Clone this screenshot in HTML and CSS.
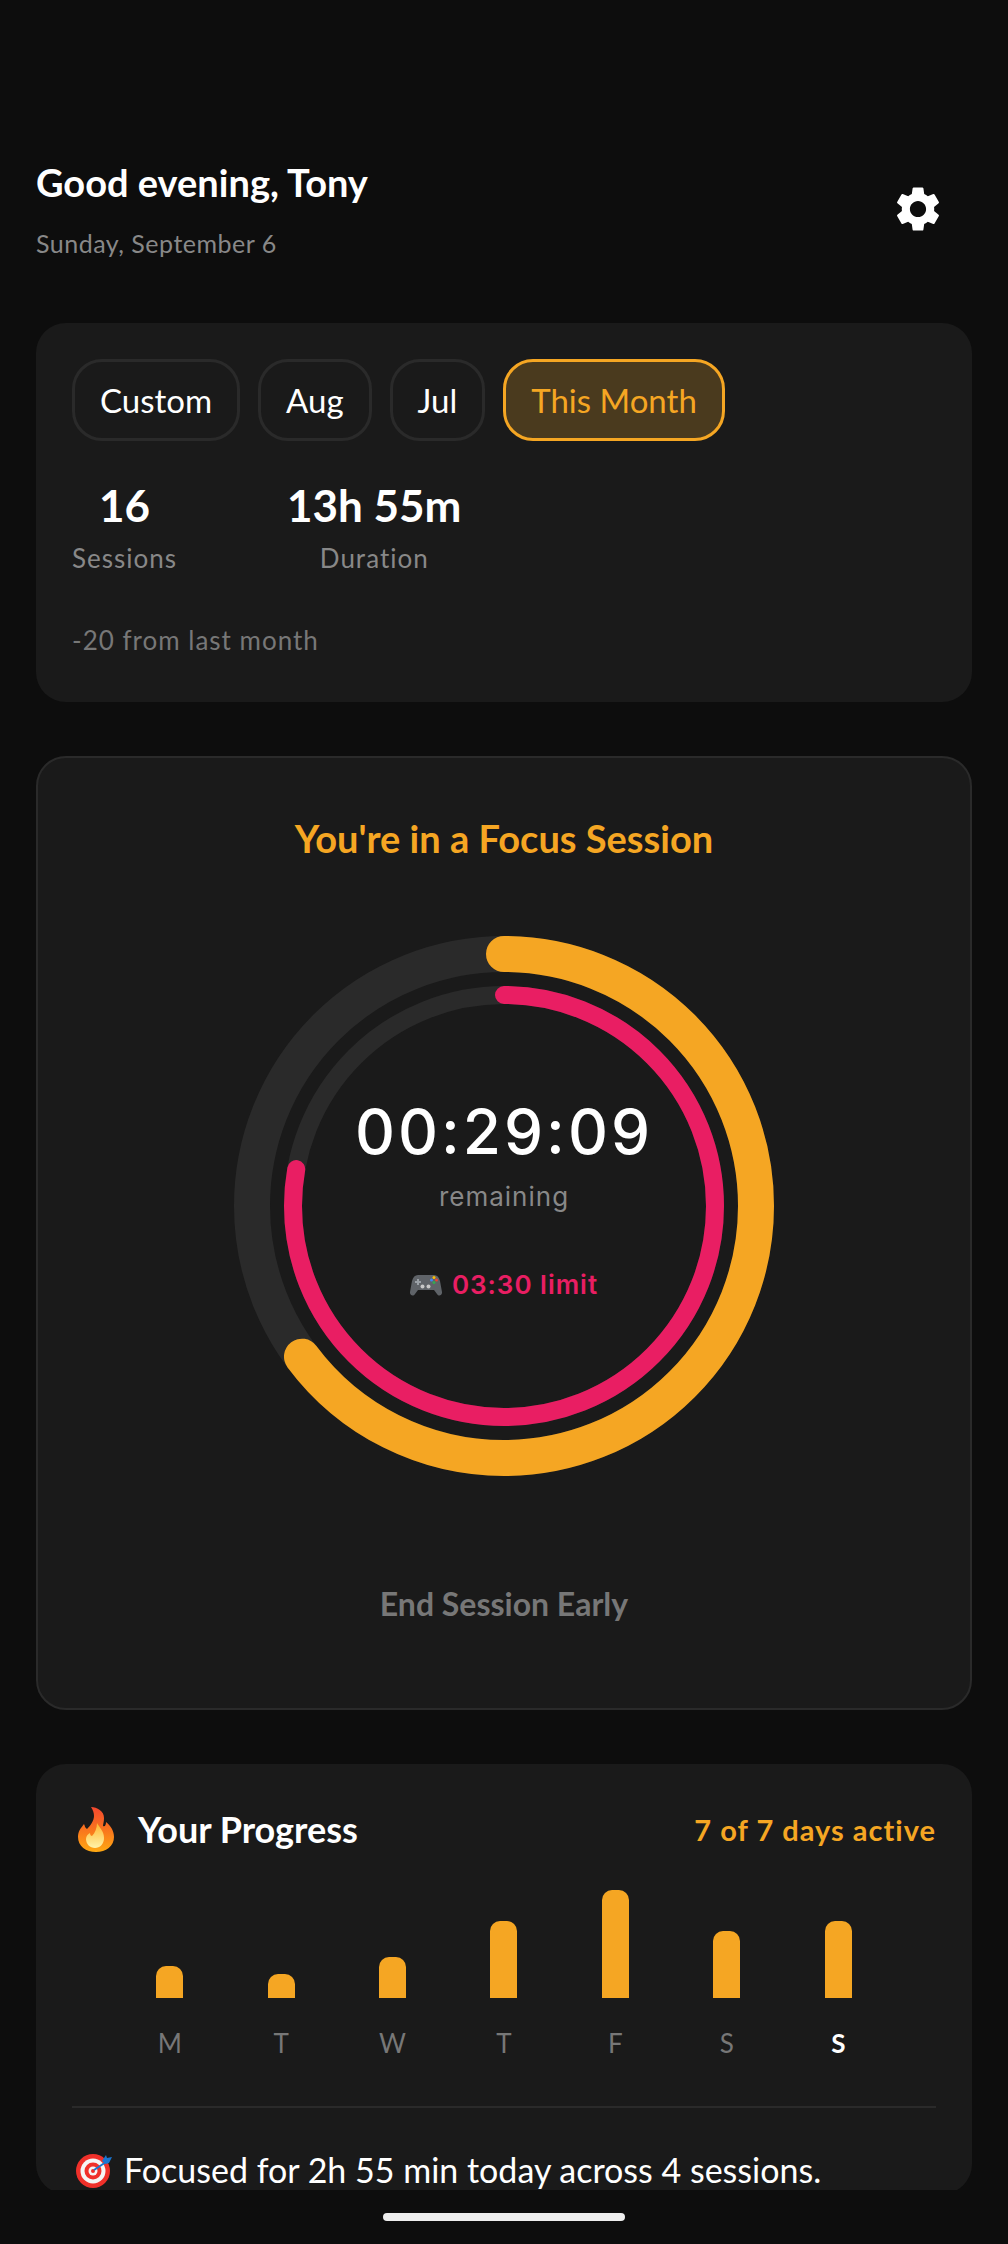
FILE: index.html
```html
<!DOCTYPE html>
<html>
  <head>
    <meta charset="utf-8">
    <title>Focus</title>
    <link rel="stylesheet" href="styles.css">
  </head>
  <body>
    <div class="screen">
      <div class="scroll">
        <div class="header">
          <div>
            <div class="greeting">Good evening, Tony</div>
            <div class="date">Sunday, September 6</div>
          </div>
          <svg class="gear" viewBox="0 0 24 24"><path fill="#fff" d="M19.14 12.94c.04-.3.06-.61.06-.94 0-.32-.02-.64-.07-.94l2.03-1.58c.18-.14.23-.41.12-.61l-1.92-3.32c-.12-.22-.37-.29-.59-.22l-2.39.96c-.5-.38-1.03-.7-1.62-.94l-.36-2.54c-.04-.24-.24-.41-.48-.41h-3.84c-.24 0-.43.17-.47.41l-.36 2.54c-.59.24-1.13.57-1.62.94l-2.39-.96c-.22-.08-.47 0-.59.22L2.74 8.87c-.12.21-.08.47.12.61l2.03 1.58c-.05.3-.09.63-.09.94s.02.64.07.94l-2.03 1.58c-.18.14-.23.41-.12.61l1.92 3.32c.12.22.37.29.59.22l2.39-.96c.5.38 1.03.7 1.62.94l.36 2.54c.05.24.24.41.48.41h3.84c.24 0 .44-.17.47-.41l.36-2.54c.59-.24 1.13-.56 1.62-.94l2.39.96c.22.08.47 0 .59-.22l1.92-3.32c.12-.22.07-.47-.12-.61l-2.01-1.58zM12 15.6c-1.98 0-3.6-1.62-3.6-3.6s1.62-3.6 3.6-3.6 3.6 1.62 3.6 3.6-1.62 3.6-3.6 3.6z"/></svg>
        </div>

        <div class="card summary">
          <div class="pills">
            <div class="pill">Custom</div>
            <div class="pill">Aug</div>
            <div class="pill">Jul</div>
            <div class="pill selected">This Month</div>
          </div>
          <div class="stats">
            <div class="stat">
              <div class="stat-value">16</div>
              <div class="stat-label">Sessions</div>
            </div>
            <div class="stat">
              <div class="stat-value">13h 55m</div>
              <div class="stat-label">Duration</div>
            </div>
          </div>
          <div class="note">-20 from last month</div>
        </div>

        <div class="card session">
          <div class="session-title">You're in a Focus Session</div>
          <div class="ring">
            <svg width="540" height="540" viewBox="0 0 540 540">
              <circle cx="270" cy="270" r="252" fill="none" stroke="#2a2a2a" stroke-width="36"/>
              <circle cx="270" cy="270" r="211" fill="none" stroke="#2a2a2a" stroke-width="18"/>
              <circle cx="270" cy="270" r="252" fill="none" stroke="#f5a623" stroke-width="36" stroke-linecap="round" pathLength="100" stroke-dasharray="64.8 100" transform="rotate(-90 270 270)"/>
              <circle cx="270" cy="270" r="211" fill="none" stroke="#e91e63" stroke-width="18" stroke-linecap="round" pathLength="100" stroke-dasharray="77.8 100" transform="rotate(-90 270 270)"/>
            </svg>
            <div class="ring-text">
              <div class="timer">00:29:09</div>
              <div class="remaining">remaining</div>
              <div class="limit">
                <svg class="pad" viewBox="0 0 32 24">
                  <path fill="#5f6368" d="M8 2h16c3 0 5 2 6 6l2 11c.4 3-3 5-5 2l-3-4H8l-3 4c-2 3-5.400 1-5-2L2 8c1-4 3-6 6-6z"/>
                  <path fill="#9aa0a6" d="M7 6h2v2h2v2H9v2H7v-2H5V8h2z"/>
                  <circle cx="12.500" cy="13.500" r="2" fill="#c8c8c8"/>
                  <circle cx="18.500" cy="13.500" r="2" fill="#c8c8c8"/>
                  <circle cx="24" cy="4.500" r="1.500" fill="#fbbc04"/>
                  <circle cx="21.500" cy="7" r="1.500" fill="#4285f4"/>
                  <circle cx="26.500" cy="7" r="1.500" fill="#ea4335"/>
                  <circle cx="24" cy="9.500" r="1.500" fill="#34a853"/>
                </svg>
                <span>03:30 limit</span>
              </div>
            </div>
          </div>
          <div class="end-session">End Session Early</div>
        </div>

        <div class="card progress">
          <div class="progress-head">
            <div class="progress-title">
              <svg class="flame" viewBox="0 0 36 46">
                <defs>
                  <linearGradient id="flameOuter" x1="0" y1="0" x2="0" y2="1">
                    <stop offset="0" stop-color="#f4472f"/>
                    <stop offset="0.55" stop-color="#f9791c"/>
                    <stop offset="1" stop-color="#ffa912"/>
                  </linearGradient>
                  <linearGradient id="flameInner" x1="0" y1="0" x2="0" y2="1">
                    <stop offset="0" stop-color="#ffb52e"/>
                    <stop offset="1" stop-color="#fff3a8"/>
                  </linearGradient>
                </defs>
                <path fill="url(#flameOuter)" d="M13 1c6 0 13 4 13 11 0 4-1 6-1 8 2 1 3-1 3-4 5 4 8 9 8 15 0 9-8 15-18 15S0 40 0 31c0-6 3-9 6-13 1 2 1 4 3 5 3-3 7-8 7-13 0-3-1-6-3-9z"/>
                <path fill="url(#flameInner)" d="M19 17c2 4 7 8 7 15 0 6-4 10-9 10s-9-4-9-9c0-3 2-5 4-6 0 2 1 3 2 3 3-3 5-8 5-13z"/>
              </svg>
              <span>Your Progress</span>
            </div>
            <div class="active-days">7 of 7 days active</div>
          </div>
          <div class="chart">
            <div class="day"><div class="bar-slot"><div class="bar" style="height:32px"></div></div><div class="day-label">M</div></div>
            <div class="day"><div class="bar-slot"><div class="bar" style="height:24px"></div></div><div class="day-label">T</div></div>
            <div class="day"><div class="bar-slot"><div class="bar" style="height:41px"></div></div><div class="day-label">W</div></div>
            <div class="day"><div class="bar-slot"><div class="bar" style="height:77px"></div></div><div class="day-label">T</div></div>
            <div class="day"><div class="bar-slot"><div class="bar" style="height:108px"></div></div><div class="day-label">F</div></div>
            <div class="day"><div class="bar-slot"><div class="bar" style="height:67px"></div></div><div class="day-label">S</div></div>
            <div class="day"><div class="bar-slot"><div class="bar" style="height:77px"></div></div><div class="day-label today">S</div></div>
          </div>
          <div class="divider"></div>
          <div class="today-line">
            <svg class="target" viewBox="0 0 36 36">
              <circle cx="17" cy="19" r="17" fill="#f0302a"/>
              <circle cx="17" cy="19" r="12.500" fill="#f5f5f5"/>
              <circle cx="17" cy="19" r="8.500" fill="#f0302a"/>
              <circle cx="17" cy="19" r="4.500" fill="#f5f5f5"/>
              <circle cx="17" cy="19" r="2" fill="#f0302a"/>
              <path fill="none" stroke="#1976d2" stroke-width="2" d="M18 18l12-8"/>
              <path fill="#1976d2" d="M26 9l4-6 1 3 5-1-3 6-3 1z"/>
            </svg>
            <span>Focused for 2h 55 min today across 4 sessions.</span>
          </div>
        </div>
      </div>
      <div class="home-area">
        <div class="home-bar"></div>
      </div>
    </div>
  </body>
</html>
```

FILE: styles.css
```css
body {
  margin: 0;
  background: #0d0d0d;
  font-family: "Lato", "Liberation Sans", sans-serif;
  color: #fff;
}

.screen {
  width: 1008px;
  height: 2244px;
  overflow: hidden;
}
.scroll {
  height: 2190px;
  padding: 0 36px;
  overflow: hidden;
}

/* header */
.header {
  display: flex;
  justify-content: space-between;
  align-items: center;
  padding-top: 157px;
  margin-bottom: 63px;
}
.greeting {
  font-size: 38px;
  line-height: 50px;
  font-weight: 700;
}
.date {
  margin-top: 19px;
  font-size: 25px;
  line-height: 34px;
  letter-spacing: 0.5px;
  color: #888;
}
.gear {
  width: 54px;
  height: 54px;
  margin-right: 27px;
}

/* cards */
.card {
  background: #1a1a1a;
  border-radius: 30px;
  margin-bottom: 54px;
}

.summary {
  padding: 36px 36px 45px;
}
.pills {
  display: flex;
  gap: 18px;
}
.pill {
  height: 82px;
  box-sizing: border-box;
  padding: 0 25px;
  display: flex;
  align-items: center;
  border: 3px solid #2a2a2a;
  border-radius: 30px;
  font-size: 33px;
}
.pill.selected {
  background: #4a3a1e;
  border-color: #f5a623;
  color: #f5a623;
}
.stats {
  display: flex;
  gap: 110px;
  margin-top: 38px;
}
.stat {
  text-align: center;
}
.stat-value {
  font-size: 44px;
  line-height: 52px;
  font-weight: 700;
}
.stat-label {
  margin-top: 10px;
  font-size: 26px;
  line-height: 34px;
  letter-spacing: 1px;
  color: #888;
}
.note {
  margin-top: 48px;
  font-size: 26px;
  line-height: 34px;
  letter-spacing: 1px;
  color: #777;
}

.session {
  border: 2px solid #2a2a2a;
  padding: 58px 0 84px;
  text-align: center;
}
.session-title {
  font-size: 38px;
  line-height: 44px;
  font-weight: 700;
  color: #f5a623;
}
.ring {
  position: relative;
  width: 540px;
  height: 540px;
  margin: 76px auto 0;
}
.ring svg {
  display: block;
}
.ring-text {
  position: absolute;
  top: 160px;
  left: 0;
  right: 0;
  font-family: "Inter", "Liberation Sans", sans-serif;
}
.timer {
  font-size: 62px;
  line-height: 72px;
  font-weight: 500;
  letter-spacing: 3px;
}
.remaining {
  margin-top: 12px;
  font-size: 26px;
  line-height: 34px;
  letter-spacing: 1px;
  color: #888;
}
.limit {
  margin-top: 53px;
  display: flex;
  justify-content: center;
  align-items: center;
  gap: 10px;
  font-size: 26px;
  line-height: 36px;
  font-weight: 600;
  letter-spacing: 1px;
  color: #e91e63;
}
.ring svg.pad {
  width: 32px;
  height: 24px;
}
.end-session {
  margin-top: 108px;
  font-size: 32px;
  line-height: 40px;
  font-weight: 700;
  color: #777;
}

/* progress */
.progress {
  padding: 40px 36px 0;
}
.progress-head {
  display: flex;
  justify-content: space-between;
  align-items: center;
}
.progress-title {
  display: flex;
  align-items: center;
  gap: 24px;
  font-size: 36px;
  line-height: 50px;
  font-weight: 700;
}
.flame {
  width: 36px;
  height: 46px;
  margin-left: 6px;
}
.active-days {
  font-size: 29px;
  font-weight: 700;
  letter-spacing: 1px;
  color: #f5a623;
}
.chart {
  display: grid;
  grid-template-columns: repeat(7, 1fr);
  padding: 0 42px;
}
.day {
  display: flex;
  flex-direction: column;
  align-items: center;
}
.bar-slot {
  height: 144px;
  display: flex;
  align-items: flex-end;
}
.bar {
  width: 27px;
  background: #f5a623;
  border-radius: 10px 10px 0 0;
}
.day-label {
  margin-top: 28px;
  font-size: 26px;
  line-height: 34px;
  color: #777;
}
.day-label.today {
  color: #fff;
  font-weight: 700;
}
.divider {
  height: 2px;
  margin-top: 46px;
  background: #2a2a2a;
}
.today-line {
  display: flex;
  align-items: center;
  gap: 12px;
  margin-top: 38px;
  font-size: 34px;
  line-height: 48px;
}
.target {
  width: 36px;
  height: 36px;
  margin-left: 4px;
}

.home-area {
  display: flex;
  justify-content: center;
  padding-top: 23px;
}
.home-bar {
  width: 242px;
  height: 8px;
  border-radius: 4px;
  background: #eee;
}
```
